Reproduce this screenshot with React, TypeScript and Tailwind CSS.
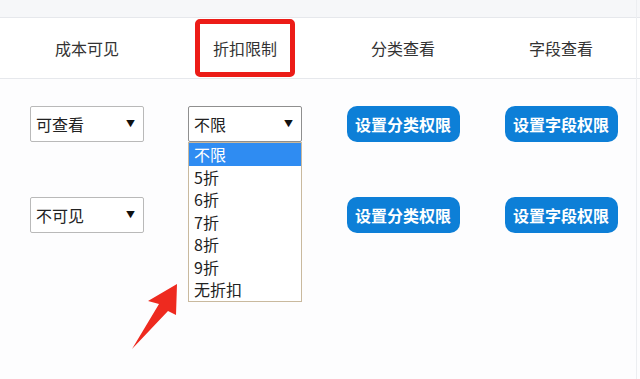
import React from "react";

const headers = ["成本可见", "折扣限制", "分类查看", "字段查看"];
const discounts = ["不限", "5折", "6折", "7折", "8折", "9折", "无折扣"];

function FakeSelect({ value, open }: { value: string; open?: boolean }) {
  return (
    <div className="relative w-[114px]">
      <div
        className={
          "flex h-[36px] items-center justify-between rounded-[2px] border bg-white pl-[5px] pr-[8px] text-[16px] text-[#222]" +
          (open ? " border-[#8f8f8f]" : " border-[#b9b9b9]")
        }
      >
        <span>{value}</span>
        <span className="text-[9px] text-[#111]">▼</span>
      </div>
      {open && (
        <ul className="absolute left-0 top-full z-10 w-full border border-[#c9b99e] bg-white">
          {discounts.map((d, i) => (
            <li
              key={d}
              className={
                "flex h-[22.5px] items-center pl-[5px] text-[16px] leading-none" +
                (i === 0 ? " bg-[#2f8cf2] text-white" : " text-[#222]")
              }
            >
              {d}
            </li>
          ))}
        </ul>
      )}
    </div>
  );
}

function BlueButton({ label }: { label: string }) {
  return (
    <button className="flex h-[36px] w-[113px] items-center justify-center rounded-[10px] bg-[#0d7fd7] text-[16px] font-semibold text-white">
      {label}
    </button>
  );
}

// discount select of row 2 sits under the open list, so it's left out
function Row({ visible, discount, open }: { visible: string; discount?: string; open?: boolean }) {
  return (
    <div className="grid grid-cols-[158px_158px_158px_158px] pl-2">
      <div className="flex justify-center">
        <FakeSelect value={visible} />
      </div>
      <div className="flex justify-center">
        {discount && <FakeSelect value={discount} open={open} />}
      </div>
      <div className="flex justify-center">
        <BlueButton label="设置分类权限" />
      </div>
      <div className="flex justify-center">
        <BlueButton label="设置字段权限" />
      </div>
    </div>
  );
}

export default function App() {
  return (
    <div
      className="relative h-[379px] w-[640px] overflow-hidden bg-[#fdfdfe]"
      style={{ fontFamily: '"Noto Sans CJK SC", "Noto Sans", sans-serif' }}
    >
      <div className="h-[18px] border-b border-[#e6e8ec] bg-[#f6f7f9]" />

      {/* header */}
      <div className="grid h-[61px] grid-cols-[158px_158px_158px_158px] items-center border-b border-[#e6e8ec] bg-white pl-2 text-[16px] text-[#333]">
        {headers.map((h, i) => (
          <div key={h} className="flex justify-center">
            {i === 1 ? (
              <div className="flex h-[58px] w-[100px] items-center justify-center rounded-[5px] border-[5px] border-[#ec1c17]">
                {h}
              </div>
            ) : (
              h
            )}
          </div>
        ))}
      </div>

      <div className="flex flex-col gap-[55px] pt-[27px]">
        <Row visible="可查看" discount="不限" open />
        <Row visible="不可见" />
      </div>

      <div className="absolute right-[3px] top-0 h-full w-px bg-[#eceef1]" />

      {/* arrow */}
      <svg className="absolute left-0 top-0" width="640" height="379" viewBox="0 0 640 379">
        <polygon points="177,284 148,301 159,304 132,349 168,311 176,315" fill="#ee2a1f" />
      </svg>
    </div>
  );
}
